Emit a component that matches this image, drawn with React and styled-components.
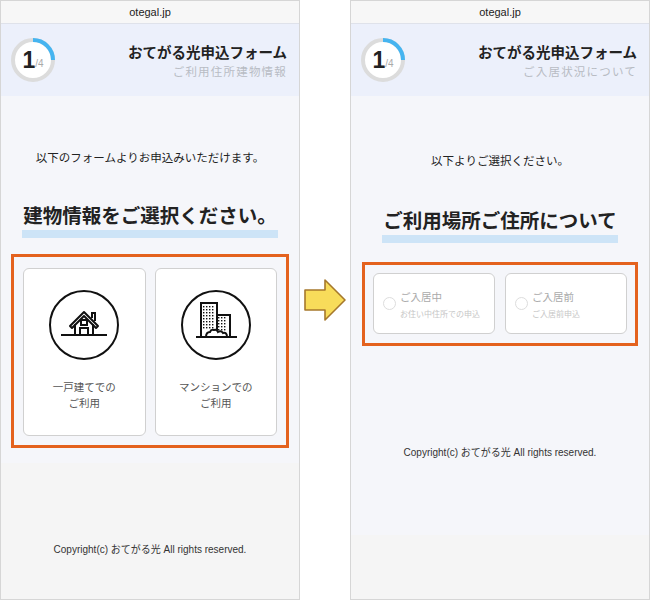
import React from "react";
import styled, { createGlobalStyle } from "styled-components";

const G = createGlobalStyle`
  html,body{margin:0;padding:0;background:#fff;}
  *{box-sizing:border-box;}
  body{font-family:"Noto Sans CJK JP","Liberation Sans",sans-serif;color:#222;}
`;
const Page = styled.div`display:flex;width:650px;height:600px;align-items:stretch;`;
const Phone = styled.div`width:300px;height:600px;border:1px solid #d6d6d6;display:flex;flex-direction:column;background:#f5f5f5;`;
const Url = styled.div`height:23px;flex:none;background:#f7f7f7;border-bottom:1px solid #dfe2ea;font:11px "Liberation Sans",sans-serif;display:flex;align-items:center;justify-content:center;color:#222;`;
const Header = styled.div`height:72px;flex:none;background:#ecf0fb;display:flex;align-items:center;justify-content:space-between;padding:0 12px 0 10px;`;
const Titles = styled.div`text-align:right;`;
const Title = styled.div`font-size:14.5px;font-weight:700;color:#222;line-height:20px;`;
const Sub = styled.div`font-size:11.5px;color:#b8bcc4;letter-spacing:1.2px;margin-top:1px;`;
const Ring = styled.div`position:relative;width:44px;height:44px;`;
const RingNum = styled.div`position:absolute;inset:0;display:flex;align-items:center;justify-content:center;font:700 23px "Liberation Sans",sans-serif;span{font-size:10px;font-weight:400;color:#aaa;margin-top:7px;}`;
const Body = styled.div`height:${p => p.$h}px;flex:none;background:#f5f6fa;display:flex;flex-direction:column;align-items:center;padding-top:${p => p.$pt}px;`;
const Lead = styled.div`font-size:11.5px;color:#222;height:16px;`;
const Heading = styled.div`margin-top:${p => p.$mt}px;font-size:19.5px;font-weight:700;padding:0 1px;line-height:26px;height:36px;background:linear-gradient(#cde4f7,#cde4f7) no-repeat 0 28px / 100% 8px;`;
const Frame = styled.div`margin-top:${p => p.$mt}px;border:3px solid #e4621e;width:${p => p.$w}px;padding:${p => p.$p};display:grid;grid-template-columns:1fr 1fr;gap:${p => p.$gap}px;`;
const Card = styled.div`background:#fff;border:1.5px solid #d0d0d0;border-radius:6px;height:${p => p.$h}px;`;
const BigCard = styled(Card)`display:flex;flex-direction:column;align-items:center;padding-top:20px;`;
const CardText = styled.div`margin-top:18px;font-size:10.5px;color:#555;text-align:center;line-height:16px;`;
const RadioCard = styled(Card)`display:flex;align-items:center;padding-left:9px;gap:4px;`;
const Radio = styled.div`width:13px;height:13px;border-radius:50%;border:1px solid #ddd;`;
const RTitle = styled.div`font-size:10.5px;color:#aaa;`;
const RSub = styled.div`font-size:8px;color:#c6c6c6;margin-top:4px;`;
const Copy = styled.div`font:10px "Liberation Sans","Noto Sans CJK JP",sans-serif;color:#333;margin-top:${p => p.$mt}px;`;
const Footer = styled.div`flex:1;display:flex;align-items:flex-start;justify-content:center;padding-top:${p => p.$pt}px;`;
const Gap = styled.div`width:50px;display:flex;justify-content:center;padding-top:277px;`;

const ProgressRing = () => (
  <Ring>
    <svg width="44" height="44" viewBox="0 0 44 44">
      <circle cx="22" cy="22" r="20" fill="#fff" stroke="#dcdcdc" strokeWidth="4" />
      <path d="M22 2 A20 20 0 0 1 42 22" fill="none" stroke="#45b4f0" strokeWidth="4" />
    </svg>
    <RingNum>1<span>/4</span></RingNum>
  </Ring>
);

const House = () => (
  <svg width="72" height="72" viewBox="0 0 72 72" fill="none" stroke="#111" strokeWidth="2">
    <circle cx="36" cy="36" r="34" />
    <path d="M13 46 H59" />
    <path d="M22 37 L36 23 L50 37 L48 39 L36 27 L24 39 Z" strokeLinejoin="round" />
    <path d="M44 29 V24 H47 V32" />
    <path d="M27 35 V46 M45 35 V46" />
    <rect x="33" y="31" width="6" height="5" />
    <path d="M32 46 V39 H40 V46" />
  </svg>
);
const Building = () => {
  const dots = [];
  for (let r = 0; r < 8; r++) for (let c = 0; c < 4; c++) dots.push(<rect key={"a"+r+c} x={23 + c * 3} y={17 + r * 3} width="1.4" height="1.4" fill="#111" stroke="none" />);
  for (let r = 0; r < 5; r++) for (let c = 0; c < 3; c++) dots.push(<rect key={"b"+r+c} x={38 + c * 3} y={28 + r * 3} width="1.4" height="1.4" fill="#111" stroke="none" />);
  return (
    <svg width="72" height="72" viewBox="0 0 72 72" fill="none" stroke="#111" strokeWidth="2">
      <circle cx="36" cy="36" r="34" />
      <path d="M21 48 V14 H37 V48 M36 26 H50 V48" />
      {dots}
      <path d="M26 48 q0 -5 4 -5 q1 -3 4 -2 q3 -1 4 2 q3 -2 5 1 q4 -1 4 4" fill="#fff" />
      <path d="M16 48 H57" />
    </svg>
  );
};

const Arrow = () => (
  <svg width="44" height="46" viewBox="0 0 44 46">
    <path d="M2 13 H22 V3 L42 23 L22 43 V33 H2 Z" fill="#f8dc5a" stroke="#a6782c" strokeWidth="1.6" strokeLinejoin="round" />
  </svg>
);

export default function App() {
  return (
    <Page>
      <G />
      <Phone>
        <Url>otegal.jp</Url>
        <Header>
          <ProgressRing />
          <Titles><Title>おてがる光申込フォーム</Title><Sub>ご利用住所建物情報</Sub></Titles>
        </Header>
        <Body $h={367} $pt={53}>
          <Lead>以下のフォームよりお申込みいただけます。</Lead>
          <Heading $mt={37}>建物情報をご選択ください。</Heading>
          <Frame $mt={16} $w={278} $p="11px 9px 9px 9px" $gap={9}>
            <BigCard $h={168}><House /><CardText>一戸建てでの<br />ご利用</CardText></BigCard>
            <BigCard $h={168}><Building /><CardText>マンションでの<br />ご利用</CardText></BigCard>
          </Frame>
        </Body>
        <Footer $pt={78}><Copy $mt={0}>Copyright(c) おてがる光 All rights reserved.</Copy></Footer>
      </Phone>
      <Gap><Arrow /></Gap>
      <Phone>
        <Url>otegal.jp</Url>
        <Header>
          <ProgressRing />
          <Titles><Title>おてがる光申込フォーム</Title><Sub>ご入居状況について</Sub></Titles>
        </Header>
        <Body $h={439} $pt={56}>
          <Lead>以下よりご選択ください。</Lead>
          <Heading $mt={39}>ご利用場所ご住所について</Heading>
          <Frame $mt={19} $w={276} $p="8px 8px 9px 8px" $gap={10}>
            <RadioCard $h={61}><Radio /><div><RTitle>ご入居中</RTitle><RSub>お住い中住所での申込</RSub></div></RadioCard>
            <RadioCard $h={61}><Radio /><div><RTitle>ご入居前</RTitle><RSub>ご入居前申込</RSub></div></RadioCard>
          </Frame>
          <Copy $mt={98}>Copyright(c) おてがる光 All rights reserved.</Copy>
        </Body>
        <Footer $pt={0} />
      </Phone>
    </Page>
  );
}
